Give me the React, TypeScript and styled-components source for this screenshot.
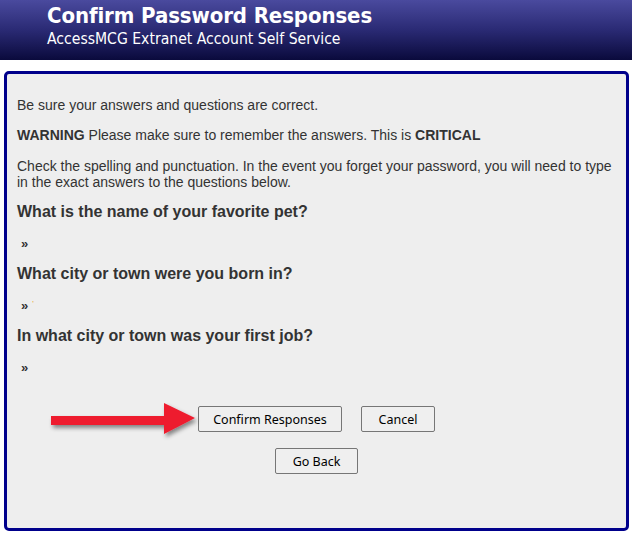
import React from "react";
import styled, { createGlobalStyle } from "styled-components";

const Global = createGlobalStyle`
  html, body { margin: 0; padding: 0; background: #ffffff; }
  body { font-family: "Liberation Sans", Arial, sans-serif; }
`;

const Header = styled.header`
  height: 60px;
  box-sizing: border-box;
  padding: 3px 0 0 47px;
  background: linear-gradient(to bottom, #4a4a9e 0%, #2a2a74 50%, #0a0a3c 100%);
  color: #ffffff;
  font-family: "DejaVu Sans Condensed", "DejaVu Sans", sans-serif;
`;

const Title = styled.h1`
  margin: 0;
  font-size: 22px;
  font-weight: bold;
  line-height: 26px;
  letter-spacing: -0.1px;
`;

const Subtitle = styled.div`
  font-size: 15.6px;
  line-height: 18px;
  margin-top: 1px;
`;

const Panel = styled.main`
  margin: 11px 3px 0 4px;
  border: 3px solid #00008b;
  border-radius: 5px;
  background: #eeeeee;
  padding: 23px 10px 54px 10px;
  color: #333333;
`;

const Para = styled.p<{ $gap?: number }>`
  margin: 0 0 ${(p) => p.$gap ?? 14}px 0;
  font-size: 14px;
  line-height: 16px;
`;

const Question = styled.h3`
  margin: 12px 0 0 0;
  font-size: 16px;
  line-height: 20px;
  font-weight: bold;
  color: #333333;
`;

const Answer = styled.div`
  margin: 14px 0 0 4px;
  font-size: 13px;
  font-weight: bold;
  line-height: 16px;
  color: #333333;
  display: flex;
  align-items: center;
  gap: 4px;
`;

const Mark = styled.span`
  color: #e8a020;
  font-size: 8px;
  line-height: 8px;
  font-weight: normal;
  align-self: flex-start;
  margin-top: 2px;
`;

const ButtonRow = styled.div<{ $top: number }>`
  display: flex;
  justify-content: center;
  gap: 19px;
  margin-top: ${(p) => p.$top}px;
`;

const ArrowHolder = styled.div`
  position: relative;
  display: flex;
`;

const ArrowSvg = styled.svg`
  position: absolute;
  right: calc(100% + 1px);
  top: -3px;
  overflow: visible;
`;

const Button = styled.button<{ $w: number }>`
  width: ${(p) => p.$w}px;
  height: 26px;
  box-sizing: border-box;
  border: 1px solid #767676;
  border-radius: 2px;
  background: #efefef;
  color: #000000;
  font-family: "Noto Sans", "Open Sans", sans-serif;
  font-size: 12.5px;
  padding: 0;
  cursor: pointer;
`;

const questions = [
  { q: "What is the name of your favorite pet?", mark: false },
  { q: "What city or town were you born in?", mark: true },
  { q: "In what city or town was your first job?", mark: false },
];

export default function App() {
  return (
    <>
      <Global />
      <Header>
        <Title>Confirm Password Responses</Title>
        <Subtitle>AccessMCG Extranet Account Self Service</Subtitle>
      </Header>
      <Panel>
        <Para>Be sure your answers and questions are correct.</Para>
        <Para $gap={15}>
          <b>WARNING</b> Please make sure to remember the answers. This is <b>CRITICAL</b>
        </Para>
        <Para $gap={0}>
          Check the spelling and punctuation. In the event you forget your password, you will need to type
          in the exact answers to the questions below.
        </Para>
        {questions.map((item) => (
          <React.Fragment key={item.q}>
            <Question>{item.q}</Question>
            <Answer>
              <span>»</span>
              {item.mark && <Mark>'</Mark>}
            </Answer>
          </React.Fragment>
        ))}
        <ButtonRow $top={30}>
          <ArrowHolder>
            <ArrowSvg width="146" height="34" viewBox="0 0 146 34">
              <defs>
                <filter id="sh" x="-10%" y="-30%" width="130%" height="180%">
                  <feDropShadow dx="2" dy="3" stdDeviation="2" floodColor="#000" floodOpacity="0.45" />
                </filter>
              </defs>
              <g filter="url(#sh)">
                <rect x="0" y="13" width="114" height="9" fill="#ee1b2f" />
                <polygon points="113,0 144,15 113,31" fill="#ee1b2f" />
              </g>
            </ArrowSvg>
            <Button $w={144}>Confirm Responses</Button>
          </ArrowHolder>
          <Button $w={74}>Cancel</Button>
        </ButtonRow>
        <ButtonRow $top={16}>
          <Button $w={83}>Go Back</Button>
        </ButtonRow>
      </Panel>
    </>
  );
}
